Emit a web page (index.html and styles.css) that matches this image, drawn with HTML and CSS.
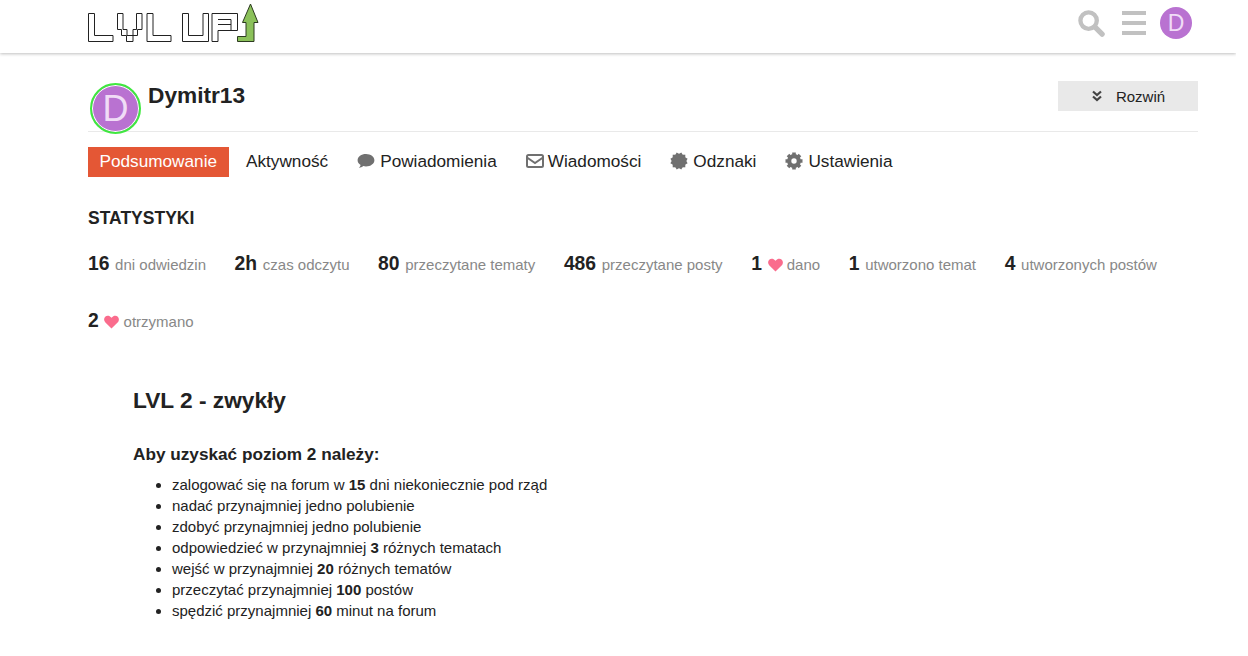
FILE: index.html
```html
<!DOCTYPE html>
<html lang="pl">
<head>
  <meta charset="UTF-8">
  <title>Dymitr13 - LVL UP</title>
  <link rel="stylesheet" href="styles.css">
</head>
<body>

<!-- Naglowek -->
<header class="site-header">
  <div class="wrap header-row">
    <svg class="logo" width="172" height="46" viewBox="0 0 172 46" fill="none" stroke="#222" stroke-width="1">
      <path d="M.5 13.500H6.500V35.500H25V41.500H.5Z"/>
      <path d="M29.500 13.500H35V29.500H39V35.500H45V41.500H38.500V35.500H33.500V29.500H29.500Z"/>
      <path d="M48.500 13.500H54V29.500H49.500V35.500H45V29.500H48.500Z"/>
      <path d="M59 13.500H65V35.500H83V41.500H59Z"/>
      <path d="M94.500 13.500H100.500V35.500H115V13.500H120.500V41.500H94.500Z"/>
      <path d="M124 13.500H149.500V30.500H130V41.500H124Z"/>
      <path d="M130 19.500H143V30.500M130 24.500H143"/>
      <path d="M149.500 41.500V36.500H158V22.500H154.500L162.500 4L170 22.500H166V41.500Z" fill="#8bc15a" stroke="#2c3a20"/>
    </svg>
    <div class="header-icons">
      <svg class="icon-search" width="27" height="27" viewBox="0 0 28 28" fill="none" stroke="#c1c1c1">
        <circle cx="11" cy="11" r="8.500" stroke-width="4.500"/>
        <path d="M18 18L25 25" stroke-width="5.500" stroke-linecap="round"/>
      </svg>
      <div class="burger"><span></span><span></span><span></span></div>
      <div class="avatar-small">D</div>
    </div>
  </div>
</header>

<main class="wrap">

  <!-- Karta uzytkownika -->
  <section class="user-head">
    <div class="avatar-big">D</div>
    <h1>Dymitr13</h1>
    <button class="expand">
      <svg width="12" height="12" viewBox="0 0 12 12" fill="none" stroke="#444" stroke-width="2.200">
        <path d="M2 1.500L6 5L10 1.500"/>
        <path d="M2 6.500L6 10L10 6.500"/>
      </svg>
      Rozwiń
    </button>
  </section>

  <!-- Nawigacja -->
  <nav class="user-nav">
    <a class="active">Podsumowanie</a>
    <a>Aktywność</a>
    <a>
      <svg width="18" height="16" viewBox="0 0 18 16" fill="#707070"><path d="M9 1C4.300 1 .6 3.700.6 7.200c0 2 1.200 3.700 3 4.800-.2 1.100-.8 2-1.700 2.900 1.600-.1 3.200-.8 4.400-1.800.9.200 1.800.3 2.700.3 4.700 0 8.400-2.800 8.400-6.200S13.700 1 9 1z"/></svg>
      Powiadomienia
    </a>
    <a class="tight">
      <svg width="18" height="14" viewBox="0 0 18 14" fill="none" stroke="#707070" stroke-width="2"><rect x="1" y="1" width="16" height="12" rx="1.500"/><path d="M1 3.500L9 9L17 3.500"/></svg>
      Wiadomości
    </a>
    <a>
      <svg width="18" height="18" viewBox="0 0 18 18" fill="#707070"><rect x="2.700" y="2.700" width="12.600" height="12.600"/><rect x="2.700" y="2.700" width="12.600" height="12.600" transform="rotate(30 9 9)"/><rect x="2.700" y="2.700" width="12.600" height="12.600" transform="rotate(60 9 9)"/></svg>
      Odznaki
    </a>
    <a>
      <svg width="18" height="18" viewBox="0 0 18 18"><circle cx="9" cy="9" r="4.800" fill="none" stroke="#707070" stroke-width="4.200"/><g stroke="#707070" stroke-width="3.600"><path d="M9 .5V4M9 14V17.500M.5 9H4M14 9H17.500M3 3L5.400 5.400M12.600 12.600L15 15M15 3L12.600 5.400M5.400 12.600L3 15"/></g></svg>
      Ustawienia
    </a>
  </nav>

  <!-- Statystyki -->
  <h2 class="stats-title">STATYSTYKI</h2>
  <ul class="stats">
    <li><b>16</b> dni odwiedzin</li>
    <li><b>2h</b> czas odczytu</li>
    <li><b>80</b> przeczytane tematy</li>
    <li><b>486</b> przeczytane posty</li>
    <li><b>1</b> <svg class="heart" width="15" height="14" viewBox="0 0 15 14"><path d="M7.500 13.500L1.400 7.500C-.4 5.600-.2 3 1.200 1.700 2.900.2 5.600.4 7.500 2.800 9.400.4 12.100.2 13.800 1.700 15.200 3 15.400 5.600 13.600 7.500Z"/></svg> dano</li>
    <li><b>1</b> utworzono temat</li>
    <li><b>4</b> utworzonych postów</li>
    <li><b>2</b> <svg class="heart" width="15" height="14" viewBox="0 0 15 14"><path d="M7.500 13.500L1.400 7.500C-.4 5.600-.2 3 1.200 1.700 2.900.2 5.600.4 7.500 2.800 9.400.4 12.100.2 13.800 1.700 15.200 3 15.400 5.600 13.600 7.500Z"/></svg> otrzymano</li>
  </ul>

  <!-- Opis poziomu -->
  <article class="level">
    <h2>LVL 2 - zwykły</h2>
    <h3>Aby uzyskać poziom 2 należy:</h3>
    <ul>
      <li>zalogować się na forum w <b>15</b> dni niekoniecznie pod rząd</li>
      <li>nadać przynajmniej jedno polubienie</li>
      <li>zdobyć przynajmniej jedno polubienie</li>
      <li>odpowiedzieć w przynajmniej <b>3</b> różnych tematach</li>
      <li>wejść w przynajmniej <b>20</b> różnych tematów</li>
      <li>przeczytać przynajmniej <b>100</b> postów</li>
      <li>spędzić przynajmniej <b>60</b> minut na forum</li>
    </ul>
  </article>

</main>

</body>
</html>
```

FILE: styles.css
```css
html {
  overflow: hidden;
}

body {
  margin: 0;
  width: 1236px;
  font-family: "Liberation Sans", Arial, sans-serif;
  color: #222;
  background: #fff;
}

.wrap {
  width: 1110px;
  margin-left: 88px;
}

/* Naglowek */
.site-header {
  height: 53px;
  box-shadow: 0 1px 3px rgba(0, 0, 0, 0.25);
}

.header-row {
  display: flex;
  justify-content: space-between;
  height: 53px;
}

.logo {
  display: block;
  overflow: visible;
}

.header-icons {
  display: flex;
  align-items: center;
  gap: 17px;
  padding: 0 6px 7px 0;
}

.burger {
  display: flex;
  flex-direction: column;
  gap: 6px;
  width: 24px;
  margin-right: -3px;
}

.burger span {
  height: 4px;
  background: #c1c1c1;
}

.avatar-small {
  width: 32px;
  height: 32px;
  border-radius: 50%;
  background: #b972d1;
  color: #f0dcf6;
  font-size: 23px;
  line-height: 32px;
  text-align: center;
}

/* Karta uzytkownika */
.user-head {
  display: flex;
  align-items: flex-start;
  height: 78px;
  border-bottom: 1px solid #e9e9e9;
}

.avatar-big {
  width: 47px;
  height: 47px;
  margin: 30px 7px 0 2px;
  border: 2px solid #3fe83f;
  border-radius: 50%;
  background: #b972d1;
  box-shadow: inset 0 0 0 1px #fff;
  color: #f0dcf6;
  font-size: 36px;
  line-height: 47px;
  text-align: center;
}

.user-head h1 {
  flex: 1;
  margin: 28px 0 0;
  font-size: 22.700px;
  line-height: 28px;
}

.expand {
  display: flex;
  align-items: center;
  justify-content: center;
  gap: 13px;
  width: 140px;
  height: 30px;
  margin-top: 28px;
  border: none;
  background: #e9e9e9;
  color: #222;
  font-family: inherit;
  font-size: 15px;
}

/* Nawigacja */
.user-nav {
  display: flex;
  gap: 6px;
  margin-top: 15px;
}

.user-nav a {
  display: flex;
  align-items: center;
  gap: 5px;
  box-sizing: border-box;
  height: 30px;
  padding: 0 11.500px 2px;
  font-size: 17.200px;
}

.user-nav a.tight {
  gap: 4px;
}

.user-nav a.active {
  background: #e45735;
  color: #fff;
}

/* Statystyki */
.stats-title {
  margin: 32px 0 0;
  font-size: 17.500px;
  line-height: 18px;
}

.stats {
  display: flex;
  flex-wrap: wrap;
  column-gap: 28.600px;
  margin: 14px 0 0;
  padding: 0;
  list-style: none;
}

.stats li {
  height: 57px;
  padding-top: 11px;
  box-sizing: border-box;
  color: #888;
  font-size: 15px;
  line-height: 24px;
  white-space: nowrap;
}

.stats b {
  margin-right: 1.500px;
  color: #222;
  font-size: 19.300px;
}

.heart {
  fill: #fa6c8d;
  vertical-align: -2px;
}

/* Opis poziomu */
.level {
  padding: 31px 0 0 45px;
}

.level h2 {
  margin: 0;
  font-size: 22.700px;
  line-height: 28px;
}

.level h3 {
  margin: 30px 0 0;
  font-size: 17.200px;
  line-height: 20px;
}

.level ul {
  margin: 10px 0 0;
  padding-left: 39px;
  font-size: 15px;
  line-height: 21px;
}
```
